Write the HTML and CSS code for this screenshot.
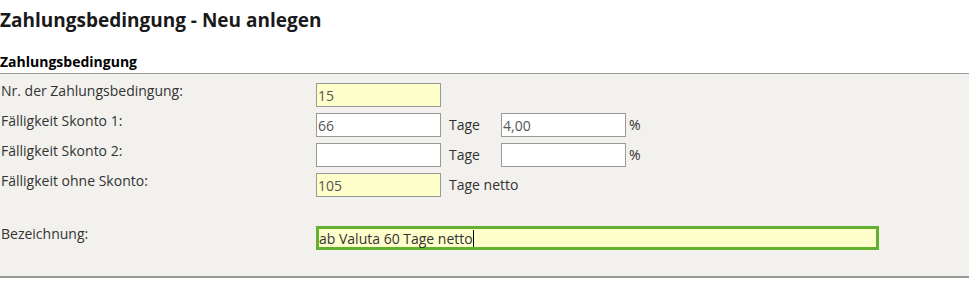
FILE: index.html
```html
<!DOCTYPE html>
<html lang="de">
<head>
    <meta charset="UTF-8">
    <title>Zahlungsbedingung - Neu anlegen</title>
    <link rel="stylesheet" href="styles.css">
</head>
<body>
    <h1 class="page-title">Zahlungsbedingung - Neu anlegen</h1>
    <h2 class="section-title">Zahlungsbedingung</h2>

    <div class="form-panel">
        <div class="form-row">
            <label class="form-label">Nr. der Zahlungsbedingung:</label>
            <input class="field required" type="text" value="15">
        </div>
        <div class="form-row">
            <label class="form-label">Fälligkeit Skonto 1:</label>
            <input class="field" type="text" value="66">
            <span class="unit">Tage</span>
            <input class="field" type="text" value="4,00">
            <span class="unit pct">%</span>
        </div>
        <div class="form-row">
            <label class="form-label">Fälligkeit Skonto 2:</label>
            <input class="field" type="text" value="">
            <span class="unit">Tage</span>
            <input class="field" type="text" value="">
            <span class="unit pct">%</span>
        </div>
        <div class="form-row">
            <label class="form-label">Fälligkeit ohne Skonto:</label>
            <input class="field required" type="text" value="105">
            <span class="unit free">Tage netto</span>
        </div>
        <div class="form-row spaced">
            <label class="form-label">Bezeichnung:</label>
            <div class="field wide required focused">ab Valuta 60 Tage netto<span class="caret"></span></div>
        </div>
    </div>
</body>
</html>
```

FILE: styles.css
```css
body {
    margin: 0;
    font-family: "Open Sans", "Liberation Sans", sans-serif;
    font-size: 14px;
    color: #333;
    background-color: #fff;
}

.page-title {
    margin: 0;
    padding-top: 7px;
    font-size: 19px;
    line-height: 26px;
    font-weight: 700;
    color: #1a1a1a;
}

.section-title {
    margin: 0;
    padding-top: 20px;
    padding-bottom: 2px;
    font-size: 14px;
    line-height: 18px;
    font-weight: 700;
    color: #000;
    border-bottom: 1px solid #999;
}

.form-panel {
    background-color: #f2f1ee;
    border-bottom: 2px solid #999;
    padding: 9px 0 26px;
    display: flex;
    flex-direction: column;
    gap: 6px;
}

.form-row {
    display: flex;
    align-items: flex-start;
}

.form-row.spaced {
    margin-top: 23px;
}

.form-label {
    width: 315px;
    flex-shrink: 0;
    padding-left: 1px;
    line-height: 16px;
    color: #333;
}

.field {
    box-sizing: border-box;
    width: 125px;
    height: 24px;
    margin: 0;
    padding: 0 1px;
    border: 1px solid #999;
    background-color: #fff;
    font-family: inherit;
    font-size: 14px;
    color: #555;
    outline: none;
}

.field.required {
    background-color: #ffffcc;
}

.field.wide {
    width: 563px;
    display: flex;
    align-items: center;
    color: #333;
}

.field.focused {
    border: 3px solid #63b22f;
    padding: 0;
}

.caret {
    display: inline-block;
    width: 1px;
    height: 17px;
    background-color: #000;
}

.unit {
    width: 60px;
    flex-shrink: 0;
    padding-left: 8px;
    box-sizing: border-box;
    line-height: 24px;
    color: #333;
}

.unit.free {
    width: auto;
}

.unit.pct {
    width: auto;
    padding-left: 3px;
}
```
